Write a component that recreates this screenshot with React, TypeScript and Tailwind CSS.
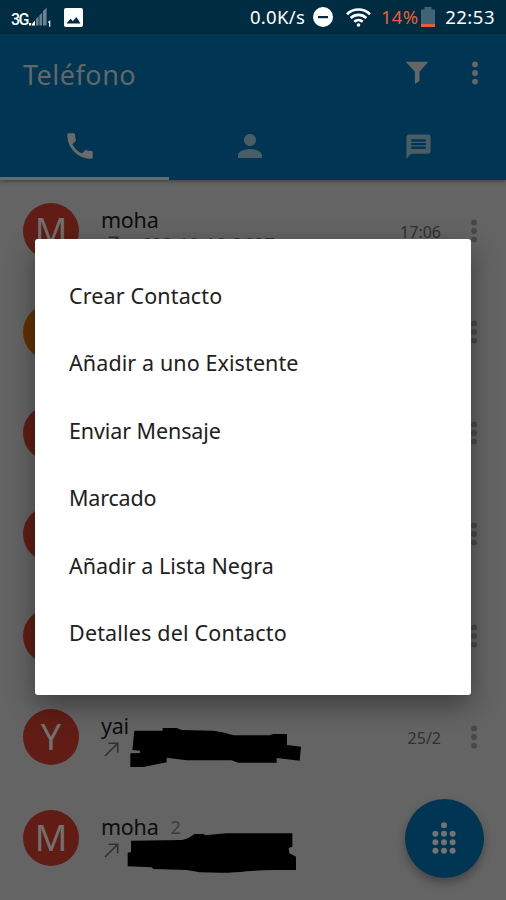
import { MdMessage, MdPerson, MdPhone } from "react-icons/md";

const menuItems = [
  { label: "Crear Contacto", className: "tracking-[0.13px]" },
  { label: "Añadir a uno Existente", className: "tracking-[0.1px]" },
  { label: "Enviar Mensaje", className: "tracking-[-0.1px]" },
  { label: "Marcado", className: "tracking-[-0.2px]" },
  { label: "Añadir a Lista Negra", className: "tracking-[0px]" },
  { label: "Detalles del Contacto", className: "tracking-[0.18px]" },
];

const calls = [
  { letter: "M", name: "moha", count: "", number: "602 10 10 3637", date: "17:06", color: "bg-[#611d15]" },
  { letter: "S", name: "", count: "", number: "", date: "", color: "bg-[#633200]" },
  { letter: "M", name: "", count: "", number: "", date: "", color: "bg-[#611d15]" },
  { letter: "M", name: "", count: "", number: "", date: "", color: "bg-[#611d15]" },
  { letter: "M", name: "", count: "", number: "", date: "", color: "bg-[#611d15]" },
  { letter: "Y", name: "yai", count: "", number: "", date: "25/2", color: "bg-[#611d15]" },
  { letter: "M", name: "moha", count: "2", number: "", date: "", color: "bg-[#611d15]" },
];

function Dots({ className }: { className: string }) {
  return (
    <svg viewBox="0 0 6 24" className={`w-1.5 h-6 shrink-0 ${className}`} fill="currentColor">
      <circle cx="3" cy="3.4" r="2.9" />
      <circle cx="3" cy="12" r="2.9" />
      <circle cx="3" cy="20.6" r="2.9" />
    </svg>
  );
}

function StatusBar() {
  return (
    <div className="h-[34px] bg-[#002c41] flex items-center pl-[11px] pr-[11px] text-white">
      <span className="font-[Roboto] font-medium text-[16px] leading-none w-[17px] pt-1.5 tracking-[-1.6px]">3G</span>
      {/* Signal strength */}
      <svg viewBox="0 0 24 20" className="w-6 h-5">
        <path d="M1 18.5v-2.4h2.2v2.4zM4 18.5V17l3-3.6v5.1z" fill="#fff" />
        <path d="M8 18.5v-6.6l2.6-2.6v9.2zM11.4 18.5V8.4L14 5.8v12.7zM14.9 18.5V4.3L18.6.6v17.9z" fill="#6b8390" />
        <path d="M20.2 15.6l1.5-1.1v5.2" fill="none" stroke="#fff" strokeWidth="1.2" />
      </svg>
      {/* Picture notification */}
      <svg viewBox="0 0 19 19" className="w-[19px] h-[19px] ml-[12px]">
        <rect width="19" height="19" rx="2" fill="#fff" />
        <path d="M2.5 15.5l4-4.8 2.4 2.6 3.4-4.3 4.2 6.5z" fill="#002c41" />
      </svg>
      <span className="ml-auto text-[18.5px] leading-none tracking-[0.3px]">0.0K/s</span>
      <svg viewBox="0 0 20 20" className="w-5 h-5 ml-2">
        <circle cx="10" cy="10" r="10" fill="#fff" />
        <rect x="5" y="9" width="10" height="2.2" fill="#002c41" />
      </svg>
      {/* Wifi */}
      <svg viewBox="0 0 25 19" className="w-[25px] h-[19px] ml-[13px]" fill="none" stroke="#fff" strokeWidth="2.6">
        <path d="M1 6.2a16.5 16.5 0 0 1 23 0" />
        <path d="M4.7 10a11.3 11.3 0 0 1 15.6 0" />
        <path d="M8.3 13.7a6.2 6.2 0 0 1 8.4 0" />
        <circle cx="12.5" cy="17" r="1.8" fill="#fff" stroke="none" />
      </svg>
      <span className="ml-[10px] text-[18.5px] leading-none text-[#e95c3b] tracking-[0.2px]">14%</span>
      <svg viewBox="0 0 14 20" className="w-3.5 h-5 ml-[3px]">
        <path d="M0 2.5h3.5V0h7v2.5H14V17H0z" fill="#426275" />
        <path d="M0 17h14v3H0z" fill="#e95c3b" />
      </svg>
      <span className="ml-2.5 text-[18.5px] leading-none tracking-[0.5px]">22:53</span>
    </div>
  );
}

function Header() {
  return (
    <header className="h-[146px] bg-[#003653] shadow-[0_1px_4px_rgba(0,0,0,0.4)] relative">
      <div className="h-[78px] flex items-center pl-[23px] pr-7 text-[#666]">
        <h1 className="text-[27px] leading-none tracking-[0.5px] pt-0.5">Teléfono</h1>
        <svg viewBox="0 0 24 24" className="w-6 h-6 ml-auto mr-[43.5px]" fill="currentColor">
          <path d="M0.7 0.7h22.6l-8.8 10v9.2l-4.6 3.1V10.7z" />
        </svg>
        <Dots className="text-[#666]" />
      </div>
      <div className="h-[68px] grid grid-cols-3">
        <div className="flex items-center justify-center pr-2 pt-[3px] border-b-[3px] border-[#666b6d] text-[#6a6a6a]">
          <MdPhone className="size-[34px]" />
        </div>
        <div className="flex items-center justify-center pr-1.5 text-[#4a5d67]">
          <MdPerson className="size-9" />
        </div>
        <div className="flex items-center justify-center pr-1.5 text-[#4a5d67]">
          <MdMessage className="size-[29px]" />
        </div>
      </div>
    </header>
  );
}

function CallRow({ call }: { call: (typeof calls)[number] }) {
  return (
    <div className="h-[101.25px] flex items-center pl-[23px] pr-[29.5px]">
      <div className={`size-14 rounded-full shrink-0 flex items-center justify-center text-[36px] leading-none text-[#737070] ${call.color}`}>
        {call.letter}
      </div>
      <div className="ml-[22px] flex-1 h-[58px]">
        <div className="h-[34px] pt-0.5 flex items-center text-[21.5px] leading-none text-[#0d0d0d] tracking-[-0.25px]">
          {call.name}
          <span className="ml-3 text-[18px] text-[#3c3c3c]">{call.count}</span>
        </div>
        <div className="flex items-start pl-[3px] gap-[22px] text-[#303030]">
          <svg viewBox="0 0 15 15" className="w-[15px] h-[15px]" fill="none" stroke="currentColor" strokeWidth="1.6">
            <path d="M1 14L13.5 1.5M4.5 1.3h9.2v9.2" />
          </svg>
          <span className="text-[18px] leading-none tracking-[0.5px] -mt-px">{call.number}</span>
        </div>
      </div>
      <span className="text-[16px] leading-none text-[#303030] mr-[29.5px] pt-0.5">{call.date}</span>
      <Dots className="text-[#484848]" />
    </div>
  );
}

export default function App() {
  return (
    <div className="relative w-[506px] h-[900px] overflow-hidden bg-[#646464] font-['Noto_Sans',sans-serif]">
      <StatusBar />
      <Header />
      <main>
        {calls.map((call, i) => (
          <CallRow key={i} call={call} />
        ))}
      </main>

      {/* Scribbled out numbers */}
      <svg viewBox="390 111 516 123" className="absolute left-[130px] top-[727px] w-[172px] h-[41px]">
        <path d="M403 122H488V114H530L545 120L640 122Q670 125 700 136H808L820 132H861V165L903 170L899 212L830 204V218H715L695 211H560L500 203V217L430 231H391V190L420 189V182L397 180Z" />
      </svg>
      <svg viewBox="381 426 510 126" className="absolute left-[127px] top-[832px] w-[170px] h-[42px]">
        <path d="M393 452L545 450Q565 447 583 432H612L615 436L680 430H877V470L866 474L868 490L888 500V540H820Q780 541 740 544Q690 551 600 547L560 540L460 537L455 532L383 529V488L393 486Z" />
      </svg>

      {/* Dialpad button */}
      <button className="absolute left-[404.5px] top-[798.5px] size-[79px] rounded-full bg-[#003653] shadow-[0_5px_10px_rgba(0,0,0,0.3)] flex items-center justify-center">
        <svg viewBox="0 0 24 32" className="w-6 h-8 text-[#737373]" fill="currentColor">
          <circle cx="12" cy="3.2" r="3" />
          {[11.8, 20.3, 28.8].map((y) => (
            <g key={y}>
              <circle cx="3.4" cy={y} r="3" />
              <circle cx="12" cy={y} r="3" />
              <circle cx="20.6" cy={y} r="3" />
            </g>
          ))}
        </svg>
      </button>

      {/* Context menu */}
      <div className="absolute left-[35px] top-[239px] w-[436px] h-[456px] rounded-[3px] bg-white pt-[23px] shadow-[0_10px_28px_rgba(0,0,0,0.4)]">
        {menuItems.map((item) => (
          <div key={item.label} className="h-[67.5px] flex items-center pl-[34px] text-[21.5px] text-[#212121]">
            <span className={item.className}>{item.label}</span>
          </div>
        ))}
      </div>
    </div>
  );
}
